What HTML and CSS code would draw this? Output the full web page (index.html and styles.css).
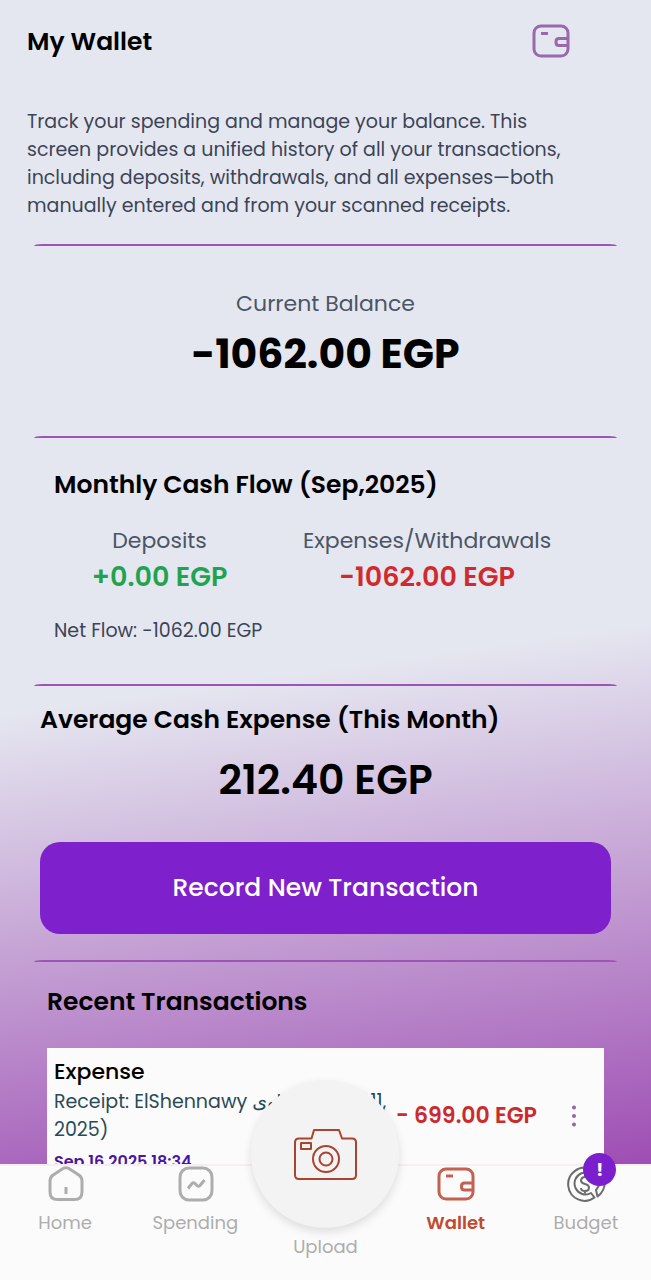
FILE: index.html
```html
<!DOCTYPE html>
<html lang="en">
<head>
    <meta charset="utf-8" />
    <meta name="viewport" content="width=device-width, initial-scale=1">
    <title>My Wallet</title>
    <link rel="stylesheet" href="styles.css">
</head>
<body>
    <div class="app">
        <main class="screen">
            <header class="header">
                <h1>My Wallet</h1>
                <svg class="header-icon" viewBox="0 0 40 36" fill="none" stroke="currentColor" stroke-width="3">
                    <rect x="3" y="2" width="34" height="30" rx="7" />
                    <path d="M37 14.500H28q-3 0-3 3v1q0 3 3 3h9" />
                    <path d="M10 9.500h7" />
                </svg>
            </header>

            <p class="intro">Track your spending and manage your balance. This screen provides a unified history of all your transactions, including deposits, withdrawals, and all expenses—both manually entered and from your scanned receipts.</p>

            <section class="panel balance">
                <p class="label">Current Balance</p>
                <p class="amount amount-bold">-1062.00 EGP</p>
            </section>

            <section class="panel cash-flow">
                <h2>Monthly Cash Flow (Sep,2025)</h2>
                <div class="flow-row">
                    <div>
                        <p class="label">Deposits</p>
                        <p class="flow-value positive">+0.00 EGP</p>
                    </div>
                    <div>
                        <p class="label">Expenses/Withdrawals</p>
                        <p class="flow-value negative">-1062.00 EGP</p>
                    </div>
                </div>
                <p class="net-flow">Net Flow: -1062.00 EGP</p>
            </section>

            <section class="panel average">
                <h2>Average Cash Expense (This Month)</h2>
                <p class="amount">212.40 EGP</p>
                <button class="record-button" type="button">Record New Transaction</button>
            </section>

            <section class="panel recent">
                <h2>Recent Transactions</h2>
                <article class="transaction">
                    <div class="details">
                        <h3>Expense</h3>
                        <p class="note">Receipt: ElShennawy الشناوى (Sep 11, 2025)</p>
                        <p class="date">Sep 16,2025 18:34</p>
                    </div>
                    <p class="price">- 699.00 EGP</p>
                    <button class="more" type="button" aria-label="More">
                        <svg viewBox="0 0 6 22" fill="currentColor">
                            <circle cx="3" cy="2.500" r="2" />
                            <circle cx="3" cy="11" r="2" />
                            <circle cx="3" cy="19.500" r="2" />
                        </svg>
                    </button>
                </article>
            </section>
        </main>

        <nav class="tab-bar">
            <a class="tab" href="#home">
                <svg class="tab-icon" viewBox="0 0 40 36" fill="none" stroke="currentColor" stroke-width="3">
                    <path d="M16.500 3.500 7.500 9.500Q5 11.600 5 15v11q0 7.500 7.500 7.500h17q7.500 0 7.500-7.500V15q0-3.400-2.500-5.500L25.500 3.500Q21 0 16.500 3.500z" />
                    <path d="M21 21v7" />
                </svg>
                <span>Home</span>
            </a>
            <a class="tab" href="#spending">
                <svg class="tab-icon" viewBox="0 0 40 36" fill="none" stroke="currentColor" stroke-width="3" stroke-linejoin="round">
                    <rect x="5" y="2" width="32" height="32" rx="9" />
                    <path d="M13 22.500l4-5q1.500-1.500 3 0l2 2q1.500 1.500 3 0l4.500-5.500" />
                </svg>
                <span>Spending</span>
            </a>
            <a class="tab tab-upload" href="#upload">
                <span class="camera">
                    <svg viewBox="0 0 64 52" fill="none" stroke="currentColor" stroke-width="2" stroke-linejoin="round">
                        <path d="M6 10.500h12.500L21 2h25l3 8.500h10q4 0 4 4V47q0 4-4 4H6q-4 0-4-4V14.500q0-4 4-4z" />
                        <rect x="8" y="15" width="10" height="6" />
                        <circle cx="33" cy="31" r="13" />
                        <circle cx="33" cy="31" r="6.500" />
                    </svg>
                </span>
                <span>Upload</span>
            </a>
            <a class="tab active" href="#wallet">
                <svg class="tab-icon" viewBox="0 0 40 36" fill="none" stroke="currentColor" stroke-width="3">
                    <rect x="3" y="3" width="34" height="30" rx="7" />
                    <path d="M37 17H28.500q-3 0-3 3v1q0 3 3 3h8.500" />
                    <path d="M10 10h7" />
                </svg>
                <span>Wallet</span>
            </a>
            <a class="tab tab-budget" href="#budget">
                <svg class="tab-icon" viewBox="0 0 40 36" fill="none" stroke="currentColor" stroke-width="2" stroke-linejoin="round">
                    <path d="M25 3A16.500 16.500 0 1 0 28.500 31.500l-3.500-4.500A11 11 0 1 1 30 14" />
                    <path d="M30 24l1.500 6.500Q38 26 39 17h-5.500q-.5 4-3.500 7z" />
                    <path d="M23 14q-.5-3-4-3t-4 3.500q0 2.500 4 3.500t4 3.500q0 3.500-4 3.500t-4-3M19 8.500V11M19 25v2.500" />
                </svg>
                <span class="badge">!</span>
                <span>Budget</span>
            </a>
        </nav>
    </div>
</body>
</html>
```
FILE: styles.css
```css
* {
    box-sizing: border-box;
}

body {
    margin: 0;
    font-family: Poppins, Inter, "DejaVu Sans", sans-serif;
    font-size: 19px;
    line-height: 28px;
    color: #000;
}

h1, h2, h3, p {
    margin: 0;
}

h1, h2 {
    font-size: 25px;
    font-weight: 600;
    line-height: 36px;
}

/* The screen scrolls, the tab bar stays at the bottom */
.app {
    display: flex;
    flex-direction: column;
    height: 100vh;
    background: linear-gradient(172deg, #e5e7f0 52%, #9f50b4 91%);
}

.screen {
    flex: 1;
    min-height: 0;
    overflow-y: auto;
    scrollbar-width: none;
}

.header {
    display: flex;
    justify-content: space-between;
    align-items: center;
    padding: 24px 80px 0 27px;
}

.header-icon {
    width: 40px;
    height: 36px;
    color: #9a69ab;
}

.intro {
    padding: 48px 80px 0 27px;
    color: #3c4456;
}

/* Each panel is divided from the last by a line that tapers at its ends */
.panel {
    margin: 0 34px;
    border-top: 2px solid #9d55b5;
    border-radius: 8px / 2px;
}

.label {
    font-size: 22px;
    line-height: 32px;
    color: #4b5565;
}

.amount {
    font-size: 41px;
    font-weight: 600;
    line-height: 60px;
    text-align: center;
}

.amount-bold {
    font-weight: 700;
}

.balance {
    margin-top: 24px;
    padding: 42px 0 52px;
    text-align: center;
}

.balance .amount {
    padding-top: 4px;
}

.cash-flow {
    padding: 29px 20px 39px;
}

.flow-row {
    display: flex;
    justify-content: space-around;
    padding: 22px 8px 20px 0;
    text-align: center;
}

.flow-value {
    font-size: 27px;
    font-weight: 600;
    line-height: 40px;
}

.positive {
    color: #1fa350;
}

.negative {
    color: #d12a2e;
}

.net-flow {
    color: #3c4456;
}

.average {
    padding: 16px 6px 26px;
}

.average .amount {
    padding: 12px 0;
}

.record-button {
    display: block;
    width: 100%;
    margin-top: 20px;
    padding: 28px;
    border: 0;
    border-radius: 20px;
    background: #7e20cc;
    color: #fff;
    font: inherit;
    font-size: 25px;
    font-weight: 500;
    line-height: 36px;
}

.recent {
    padding: 22px 13px 40px;
}

.transaction {
    display: flex;
    align-items: center;
    margin-top: 28px;
    padding: 8px 21px 1px 7px;
    background: #fbfbfb;
}

.details {
    flex: 1;
}

.details h3 {
    font-size: 22px;
    font-weight: 500;
    line-height: 32px;
}

.note {
    color: #2a4a56;
}

.date {
    padding-top: 4px;
    font-size: 16px;
    font-weight: 600;
    color: #4a16a0;
}

.price {
    font-size: 22px;
    font-weight: 600;
    color: #cb2a2e;
    white-space: nowrap;
}

.more {
    margin-left: 28px;
    padding: 4px 6px;
    border: 0;
    background: none;
    color: #9a60b0;
}

.more svg {
    display: block;
    width: 6px;
    height: 22px;
}

.tab-bar {
    display: grid;
    grid-template-columns: repeat(5, 1fr);
    height: 116px;
    border-top: 2px solid #f6eef3;
    background: #fbfbfb;
    font-size: 18px;
}

.tab {
    position: relative;
    display: flex;
    flex-direction: column;
    align-items: center;
    gap: 7px;
    color: #adadad;
    text-decoration: none;
}

.tab-icon {
    width: 40px;
    height: 36px;
}

.active {
    color: #c14a30;
    font-weight: 600;
}

.active .tab-icon {
    color: #c4604f;
}

.tab-budget .tab-icon {
    color: #6c6c6c;
}

/* Round upload button rises above the bar */
.tab-upload {
    padding-top: 67px;
}

.camera {
    position: absolute;
    top: -86px;
    display: flex;
    align-items: center;
    justify-content: center;
    width: 148px;
    height: 148px;
    border-radius: 50%;
    background: #f3f3f3;
    box-shadow: 0 4px 10px rgba(0, 0, 0, .12);
    color: #a9452f;
}

.camera svg {
    width: 64px;
    height: 52px;
}

.badge {
    position: absolute;
    top: -13px;
    left: 48%;
    width: 33px;
    height: 33px;
    border-radius: 50%;
    background: #7b1fce;
    color: #fff;
    font-weight: 700;
    line-height: 33px;
    text-align: center;
}
```
